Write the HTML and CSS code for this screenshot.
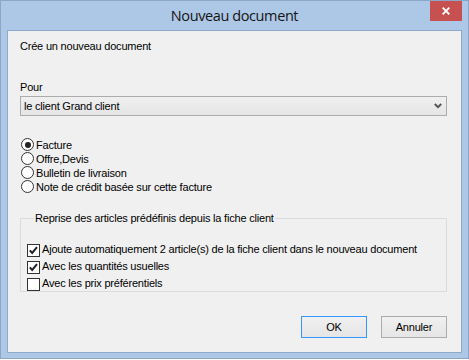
FILE: index.html
```html
<!DOCTYPE html>
<html>
  <head>
    <meta charset="utf-8" />
    <title>Nouveau document</title>
    <link rel="stylesheet" href="styles.css">
  </head>

  <body>
    <div class="window">
      <div class="titlebar">
        <span class="title">Nouveau document</span>
        <span class="close">
          <svg width="8" height="8" viewBox="0 0 8 8">
            <path d="M0.7 0.7 L7.3 7.3 M7.3 0.7 L0.7 7.3" stroke="#fff" stroke-width="1.9" />
          </svg>
        </span>
      </div>

      <div class="client">
        <div class="intro">Crée un nouveau document</div>

        <div class="field-label">Pour</div>
        <div class="select">
          <span>le client Grand client</span>
          <svg width="8" height="6" viewBox="0 0 8 6">
            <polyline points="0.8,1 4,4.2 7.2,1" fill="none" stroke="#555" stroke-width="2" />
          </svg>
        </div>

        <div class="radios">
          <div class="radio checked"><span class="circle"></span>Facture</div>
          <div class="radio"><span class="circle"></span>Offre,Devis</div>
          <div class="radio"><span class="circle"></span>Bulletin de livraison</div>
          <div class="radio"><span class="circle"></span>Note de crédit basée sur cette facture</div>
        </div>

        <fieldset class="group">
          <legend>Reprise des articles prédéfinis depuis la fiche client</legend>
          <div class="check checked">
            <span class="box">
              <svg width="11" height="11" viewBox="0 0 11 11">
                <polyline points="1.8,5.4 4.2,8 9,2.2" fill="none" stroke="#222" stroke-width="2" />
              </svg>
            </span>
            Ajoute automatiquement 2 article(s) de la fiche client dans le nouveau document
          </div>
          <div class="check checked">
            <span class="box">
              <svg width="11" height="11" viewBox="0 0 11 11">
                <polyline points="1.8,5.4 4.2,8 9,2.2" fill="none" stroke="#222" stroke-width="2" />
              </svg>
            </span>
            Avec les quantités usuelles
          </div>
          <div class="check">
            <span class="box"></span>
            Avec les prix préférentiels
          </div>
        </fieldset>

        <div class="buttons">
          <button class="default">OK</button>
          <button>Annuler</button>
        </div>
      </div>
    </div>
  </body>
</html>
```

FILE: styles.css
```css
* {
  box-sizing: border-box;
}

html,
body {
  margin: 0;
  padding: 0;
}

body {
  background: #ffffff;
  font-family: "Liberation Sans", Arial, sans-serif;
  font-size: 11px;
  line-height: 13px;
  letter-spacing: -0.2px;
  color: #000;
}

.window {
  position: relative;
  width: 469px;
  height: 359px;
  padding: 0 6px 5px 6px;
  background: #adc8e6;
  border: 1px solid #8ba6c6;
  display: flex;
  flex-direction: column;
}

.titlebar {
  height: 29px;
  display: flex;
  justify-content: center;
  align-items: center;
}

.title {
  font-family: "Open Sans", "Noto Sans", sans-serif;
  font-size: 14.5px;
  letter-spacing: -0.4px;
  line-height: 20px;
  color: #141414;
  margin-top: 1px;
}

.close {
  position: absolute;
  top: 0;
  right: 6px;
  width: 32px;
  height: 20px;
  background: #c75050;
  display: flex;
  justify-content: center;
  align-items: center;
}

.client {
  flex: 1;
  background: #f0f0f0;
  border: 1px solid #8ea9c9;
  padding: 9px 14px 0 12px;
  display: flex;
  flex-direction: column;
}

.field-label {
  margin-top: 28px;
}

.select {
  margin-top: 2px;
  height: 20px;
  border: 1px solid #acacac;
  background: linear-gradient(#f0f0f0, #e5e5e5);
  padding: 0 3px 0 3px;
  display: flex;
  justify-content: space-between;
  align-items: center;
}

.select svg {
  margin-right: 1px;
}

.radios {
  margin-top: 22px;
  margin-left: 1px;
}

.radio {
  height: 14px;
  line-height: 14px;
  display: flex;
  align-items: flex-start;
}

.circle {
  width: 13px;
  height: 13px;
  border-radius: 50%;
  border: 1px solid #333;
  background: #fff;
  margin-right: 2px;
  display: flex;
  justify-content: center;
  align-items: center;
}

.radio.checked .circle::after {
  content: "";
  width: 6px;
  height: 6px;
  border-radius: 50%;
  background: #222;
}

.group {
  margin: 18px 0 0 0;
  padding: 18px 0 0 6px;
  border: 1px solid #dcdcdc;
  height: 80px;
}

.group legend {
  margin-left: 7px;
  padding: 0 1px;
  line-height: 13px;
}

.check {
  height: 17px;
  display: flex;
  align-items: flex-start;
}

.box {
  width: 13px;
  height: 13px;
  margin-top: 1px;
  margin-right: 2px;
  border: 1px solid #333;
  background: #fff;
  display: flex;
  justify-content: center;
  align-items: center;
}

.buttons {
  margin-top: 24px;
  display: flex;
  justify-content: flex-end;
  gap: 14px;
}

button {
  width: 66px;
  height: 22px;
  padding: 0;
  font-family: inherit;
  font-size: 11px;
  letter-spacing: -0.2px;
  color: #000;
  border: 1px solid #acacac;
  background: linear-gradient(#f0f0f0, #e5e5e5);
  border-radius: 0;
}

button.default {
  border-color: #3399ff;
}
```
